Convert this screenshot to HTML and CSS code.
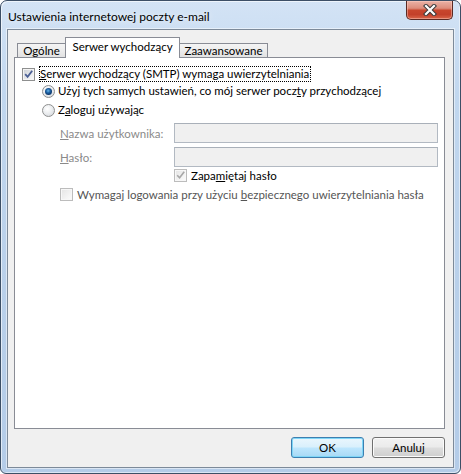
FILE: index.html
```html
<!DOCTYPE html>
<html lang="pl">
<head>
<meta charset="utf-8">
<title>Ustawienia internetowej poczty e-mail</title>
<link rel="stylesheet" href="styles.css">
</head>
<body>
<div class="window">
  <div class="titlebar">
    <span class="title">Ustawienia internetowej poczty e-mail</span>
    <div class="close">
      <svg width="14" height="12" viewBox="0 0 14 12">
        <path d="M3 2 L11 10 M11 2 L3 10" stroke="#3b3b3b" stroke-width="4.2" stroke-linecap="square" fill="none"/>
        <path d="M3 2 L11 10 M11 2 L3 10" stroke="#ffffff" stroke-width="2.2" stroke-linecap="square" fill="none"/>
      </svg>
    </div>
  </div>
  <div class="client">
    <div class="tabs">
      <div class="tab first">Ogólne</div>
      <div class="tab sel">Serwer wychodzący</div>
      <div class="tab last">Zaawansowane</div>
    </div>
    <div class="panel">
      <div class="row r1">
        <span class="cb"><svg width="9" height="9" viewBox="0 0 9 9"><path d="M1.2 4.2 L3.6 6.8 L8.2 0.8" stroke="#4a5f95" stroke-width="1.8" fill="none"/></svg></span>
        <span class="lbl focus"><u>S</u>erwer wychodzący (SMTP) wymaga uwierzytelniania</span>
      </div>
      <div class="row r2">
        <span class="rb on"><span class="dot"></span></span>
        <span class="lbl">Użyj tych samych ustawień, co mój serwer pocz<u>t</u>y przychodzącej</span>
      </div>
      <div class="row r3">
        <span class="rb"></span>
        <span class="lbl">Z<u>a</u>loguj używając</span>
      </div>
      <div class="row r4">
        <span class="flabel"><u>N</u>azwa użytkownika:</span>
        <span class="tb"></span>
      </div>
      <div class="row r5">
        <span class="flabel"><u>H</u>asło:</span>
        <span class="tb"></span>
      </div>
      <div class="row r6">
        <span class="cb dis"><svg width="9" height="9" viewBox="0 0 9 9"><path d="M1.2 4.2 L3.6 6.8 L8.2 0.8" stroke="#a7a7a7" stroke-width="1.6" fill="none"/></svg></span>
        <span class="lbl">Zapa<u>m</u>iętaj hasło</span>
      </div>
      <div class="row r7">
        <span class="cb dis"></span>
        <span class="lbl gray">Wymagaj logowania przy użyciu <u>b</u>ezpiecznego uwierzytelniania hasła</span>
      </div>
    </div>
    <div class="buttons">
      <button class="btn def">OK</button>
      <button class="btn">Anuluj</button>
    </div>
  </div>
</div>
</body>
</html>
```

FILE: styles.css
```css
html, body { margin: 0; padding: 0; }
body {
  width: 461px; height: 474px; overflow: hidden; background: #ffffff;
  font-family: Lato, "Noto Sans", sans-serif; font-size: 11.5px; color: #000;
}
.window {
  height: 474px; box-sizing: border-box;
  border: 1px solid #3c4f66; border-radius: 7px 7px 6px 6px;
  background: linear-gradient(180deg, #d3e3f5 0%, #c1d7ef 20%, #b9d0ea 60%, #b4cce8 100%);
  box-shadow: inset 1px 1px 0 rgba(255,255,255,0.6), inset -1px -1px 0 rgba(255,255,255,0.5);
  display: flex; flex-direction: column;
}
.titlebar { height: 28px; display: flex; align-items: flex-start; }
.title { padding: 9px 0 0 7px; font-size: 12px; line-height: 14px; flex: 1; text-shadow: 0 0 6px rgba(255,255,255,0.9); }
.close {
  width: 47px; height: 19px; box-sizing: border-box; margin-right: 7px;
  border: 1px solid #5a2a24; border-top: none; border-radius: 0 0 5px 5px;
  background: linear-gradient(180deg, #eab2a6 0%, #dc8d7c 40%, #c8462d 52%, #c3402a 75%, #d9664a 100%);
  box-shadow: inset 0 0 0 1px rgba(255,210,200,0.45);
  display: flex; align-items: center; justify-content: center;
}
.client {
  flex: 1; margin: 0 6px 5px 6px;
  border: 1px solid #7d8a99; box-shadow: 0 0 0 1px rgba(255,255,255,0.5);
  background: #f0f0f0;
  padding: 7px 8px 9px 6px;
  display: flex; flex-direction: column;
}
.tabs { height: 21px; display: flex; align-items: flex-end; margin-bottom: -1px; position: relative; z-index: 1; }
.tab {
  box-sizing: border-box; border: 1px solid #898c95; border-bottom: none;
  text-align: center; white-space: nowrap;
}
.tab.first, .tab.last {
  height: 14px; margin-bottom: 1px; line-height: 13px;
  background: linear-gradient(180deg, #f4f4f4 0%, #ececec 50%, #e2e2e2 100%);
}
.tab.first { width: 49px; margin-left: 3px; }
.tab.last { width: 89px; margin-left: -1px; }
.tab.sel { width: 115px; height: 21px; margin-left: -1px; background: #ffffff; line-height: 17px; }
.panel {
  flex: 1; background: #ffffff; border: 1px solid #898c95;
  padding: 8px 0 0 7px; display: flex; flex-direction: column;
}
.row { display: flex; align-items: center; }
.r1 { height: 16px; }
.r2 { height: 16px; margin-top: 1px; margin-left: 20px; }
.r3 { height: 16px; margin-top: 3px; margin-left: 20px; }
.r4 { height: 20px; margin-top: 5px; margin-left: 38px; }
.r5 { height: 20px; margin-top: 4px; margin-left: 38px; }
.r6 { height: 15px; margin-top: 1px; margin-left: 152px; }
.r7 { height: 15px; margin-top: 4px; margin-left: 38px; }
.cb {
  width: 13px; height: 13px; box-sizing: border-box; flex: none;
  border: 1px solid #8e8f8f; padding: 1px;
  background: linear-gradient(135deg, #cfd3d8, #f8f8f9) content-box, #f4f4f4;
  display: flex;
}
.cb.dis { border-color: #bcbcbc; background: linear-gradient(135deg, #e6e6e6, #fafafa) content-box, #f7f7f7; }
.lbl { margin-left: 4px; white-space: nowrap; line-height: 14px; }
.focus { border: 1px dotted #000; margin-left: 4px; padding: 0 1px 0 0; line-height: 14px; }
.r2 .lbl, .r3 .lbl { margin-left: 3px; }
.r7 .lbl { margin-left: 4px; }
.gray { color: #555555; }
.rb {
  width: 13px; height: 13px; box-sizing: border-box; border-radius: 50%; flex: none;
  border: 1px solid #8e8f8f;
  background: radial-gradient(circle at 40% 35%, #ffffff 0%, #eceef0 45%, #cfd3d8 100%);
  display: flex; align-items: center; justify-content: center;
}
.dot {
  width: 7px; height: 7px; border-radius: 50%;
  background: radial-gradient(circle at 45% 40%, #6ab8ea 0%, #1d62a6 35%, #0d3566 70%, #3e86c5 100%);
}
.flabel { width: 114px; color: #8a8a8a; white-space: nowrap; }
.tb { width: 264px; height: 20px; box-sizing: border-box; border: 1px solid #b2b9c2; border-top-color: #a9b0b9; background: #f0f0f0; }
.buttons { display: flex; justify-content: flex-end; gap: 8px; margin-top: 8px; }
.btn {
  width: 73px; height: 21px; box-sizing: border-box; padding: 0;
  border: 1px solid #707070; border-radius: 3px;
  background: linear-gradient(180deg, #f2f2f2 0%, #ebebeb 48%, #dddddd 52%, #cfcfcf 100%);
  box-shadow: inset 0 0 0 1px #fbfbfb;
  font: inherit; color: #000;
}
.btn.def {
  border-color: #3c7fb1;
  background: linear-gradient(180deg, #eaf6fd 0%, #d9f0fc 48%, #bee6fd 52%, #a7d9f5 100%);
  box-shadow: inset 0 0 0 1px #7fd6f7;
}
```
